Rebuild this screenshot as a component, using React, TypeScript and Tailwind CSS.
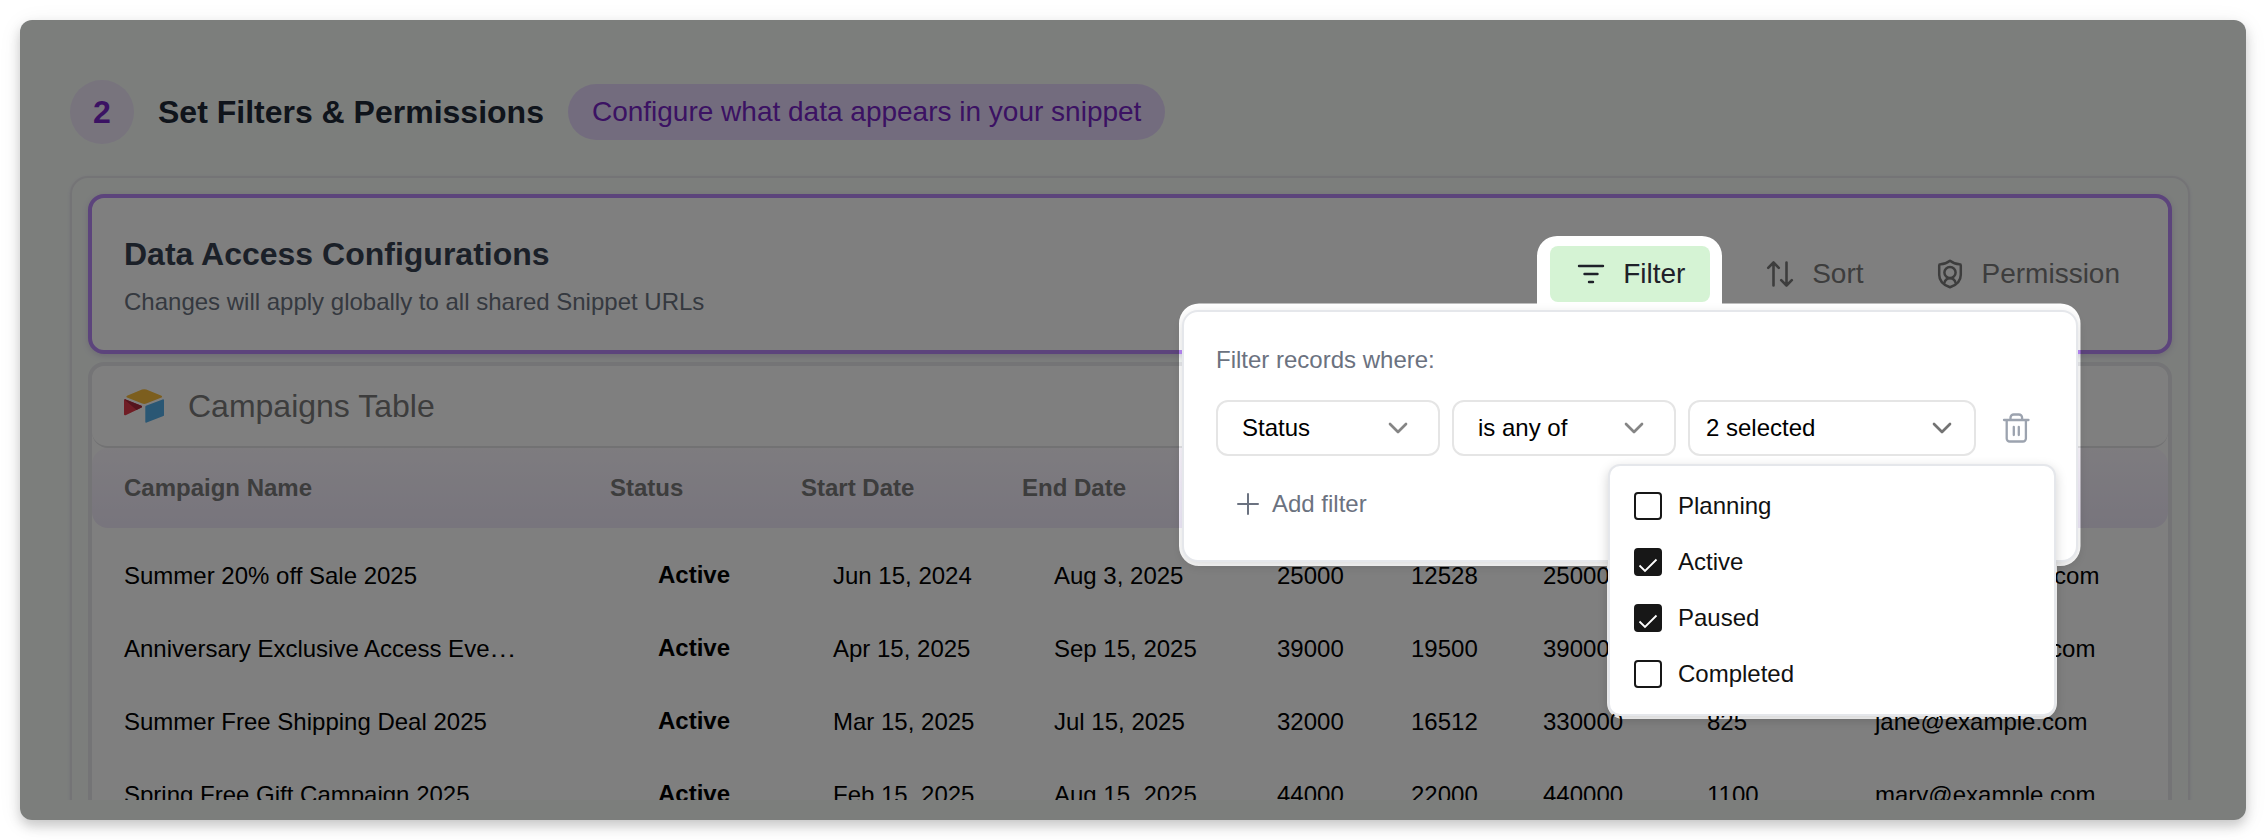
import React from "react";
import { ChevronDown } from "lucide-react";

const rows = [
  ["Summer 20% off Sale 2025", "Active", "Jun 15, 2024", "Aug 3, 2025", "25000", "12528", "250000", "625", "david@example.com"],
  ["Anniversary Exclusive Access Eve…", "Active", "Apr 15, 2025", "Sep 15, 2025", "39000", "19500", "390000", "975", "mark@example.com"],
  ["Summer Free Shipping Deal 2025", "Active", "Mar 15, 2025", "Jul 15, 2025", "32000", "16512", "330000", "825", "jane@example.com"],
  ["Spring Free Gift Campaign 2025", "Active", "Feb 15, 2025", "Aug 15, 2025", "44000", "22000", "440000", "1100", "mary@example.com"],
];

const options = [
  { label: "Planning", checked: false },
  { label: "Active", checked: true },
  { label: "Paused", checked: true },
  { label: "Completed", checked: false },
];

function FilterIcon() {
  return (
    <svg width="28" height="28" viewBox="0 0 28 28" fill="none" stroke="currentColor" strokeWidth="2.4" strokeLinecap="round">
      <path d="M2 6h24M7.5 14h13M12 22h4" />
    </svg>
  );
}

function SortIcon() {
  return (
    <svg width="28" height="28" viewBox="0 0 28 28" fill="none" stroke="currentColor" strokeWidth="2.6" strokeLinecap="round" strokeLinejoin="round">
      <path d="M7.500 25.500V2.500M2.200 7.800l5.300-5.300 5.300 5.300M20.500 2.500v23M15.200 20.200l5.300 5.300 5.300-5.300" />
    </svg>
  );
}

function PermissionIcon() {
  return (
    <svg width="28" height="32" viewBox="0 0 28 32" fill="none" stroke="currentColor" strokeWidth="2.5" strokeLinecap="round" strokeLinejoin="round">
      <path d="M14 2.800c-2.700 2.100-6 3.300-9.600 3.500-.7 0-1.200.5-1.200 1.200v9.200c0 5.800 4.200 10.300 10.800 12.600 6.600-2.300 10.800-6.800 10.800-12.600V7.500c0-.7-.5-1.200-1.200-1.200-3.600-.2-6.900-1.400-9.600-3.500z" />
      <circle cx="14" cy="14.500" r="5.600" />
      <path d="M8.200 25.200c.8-3 3-5 5.800-5s5 2 5.800 5" />
    </svg>
  );
}

function TrashIcon() {
  return (
    <svg width="28" height="32" viewBox="0 0 28 32" fill="none" stroke="currentColor" strokeWidth="2.300" strokeLinecap="round" strokeLinejoin="round">
      <path d="M2 8h24.500M4.700 8v18.500a3 3 0 0 0 3 3h13.200a3 3 0 0 0 3-3V8M8.500 7.500V5.700a3.200 3.200 0 0 1 3.200-3.200h5.200a3.200 3.200 0 0 1 3.200 3.200v1.800M11.800 15v8M16.800 15v8" />
    </svg>
  );
}

function TableLogo() {
  return (
    <svg className="h-[34px] w-[40px]" viewBox="0 0 40 34">
      <path d="M18 .6 3 6.800c-.8.4-.8 1.400 0 1.700l15.200 6c1.300.5 2.800.5 4.100 0l15.200-6c.8-.3.8-1.300 0-1.700L22.300.6a5.600 5.600 0 0 0-4.300 0z" fill="#f8bc3c" />
      <path d="M21.300 17.700v15c0 .7.700 1.200 1.400.9l16.700-6.500c.4-.1.600-.5.600-.9V11.300c0-.7-.7-1.200-1.400-.9l-16.700 6.400c-.4.200-.6.500-.6.900z" fill="#55aee8" />
      <path d="M17.500 18.500 12 21.200 1.600 26.200C.9 26.500 0 26 0 25.300V11.200c0-.3.100-.5.300-.7.500-.4 1-.3 1.400-.1l15.700 6.300c.8.300.9 1.400.1 1.800z" fill="#e13b4b" />
      <path d="M17.500 18.500 12.500 20.900.4 10.500c.5-.3.900-.2 1.300-.1l15.700 6.300c.8.300.9 1.400.1 1.800z" fill="#a8283a" />
    </svg>
  );
}

function Select({ label, width, strong }: { label: string; width: string; strong?: boolean }) {
  return (
    <div className={`flex h-14 items-center justify-between rounded-xl border-2 border-[#e5e5e5] text-black ${strong ? "pr-[16px] pl-4" : "pr-[24px] pl-6"} ${width}`}>
      <span>{label}</span>
      <ChevronDown size={32} className={strong ? "text-[#737373]" : "text-[#858585]"} />
    </div>
  );
}

export default function App() {
  return (
    <div className="h-[840px] w-[2266px] overflow-hidden bg-white p-5 font-['Liberation_Sans',Arial,sans-serif] text-2xl leading-8 text-black">
      <div className="relative h-[800px] w-[2226px] overflow-hidden rounded-xl bg-[#f8fcf9] [box-shadow:0_6px_12px_rgba(0,0,0,0.18),0_4px_24px_rgba(0,0,0,0.07)]">
        <div className="flex h-[780px] flex-col overflow-hidden px-[50px] pt-[60px]">
          <header className="flex h-16 shrink-0 items-center">
            <div className="flex size-16 items-center justify-center rounded-full bg-[#f0e8fb] text-[32px] font-bold text-[#7724c6]">2</div>
            <h1 className="ml-6 text-[32px] leading-10 font-bold text-[#1f2937]">Set Filters &amp; Permissions</h1>
            <div className="ml-6 flex h-14 items-center rounded-full bg-[#e7d9fc] px-6 text-[28px] text-[#7724c6]">Configure what data appears in your snippet</div>
          </header>

          <main className="mt-8 flex h-[700px] w-[2120px] shrink-0 flex-col gap-2 rounded-[18px] border-2 border-[#e9e8ec] p-4 shadow-[0_1px_3px_rgba(120,80,190,0.15)]">
            <section className="flex h-40 shrink-0 justify-between rounded-2xl border-4 border-[#b988f8] bg-white pl-8 shadow-[0_2px_6px_rgba(90,50,150,0.18)]">
              <div className="pt-9">
                <h2 className="text-[32px] leading-10 font-bold text-[#374151]">Data Access Configurations</h2>
                <p className="mt-3 text-[#6b7280]">Changes will apply globally to all shared Snippet URLs</p>
              </div>
              <div className="mt-12 mr-[48px] flex h-14 items-center text-[28px] text-[#7a7a7a]">
                <div className="mr-[56px] flex h-14 w-40 items-center gap-[18px] rounded-lg bg-[#d5f3d4] pl-[27px] text-[#1f2129]"><FilterIcon />Filter</div>
                <div className="mr-[72px] flex items-center gap-[18px]"><SortIcon />Sort</div>
                <div className="flex items-center gap-[18px]"><PermissionIcon />Permission</div>
              </div>
            </section>

            <section className="h-[600px] shrink-0 overflow-hidden rounded-2xl border-4 border-[#e8e9ec] bg-white">
              <div className="flex h-[82px] items-center gap-6 rounded-b-2xl border-b-2 border-[#e4e4e7] pl-8 text-[32px] text-[#7a7a7a]">
                <TableLogo />
                Campaigns Table
              </div>
              <div className="grid h-20 grid-cols-[486px_191px_221px_1fr] items-center rounded-2xl bg-linear-to-b from-[#fcf8ff] to-[#f0eafa] pl-8 font-bold text-[#7a7a7a]">
                <span>Campaign Name</span><span>Status</span><span>Start Date</span><span>End Date</span>
              </div>
              <div className="pt-[11px]">
                {rows.map((r) => (
                  <div key={r[0]} className="grid h-[73px] grid-cols-[534px_175px_221px_223px_134px_132px_164px_168px_1fr] items-center pl-8 whitespace-nowrap">
                    {r.map((c, i) => (
                      <span key={i} className={i === 1 ? "-mt-0.5 font-bold" : ""}>
                        {c.endsWith("…") ? <>{c.slice(0, -1)}<span className="inline-block origin-left scale-x-[1.15]">…</span></> : c}
                      </span>
                    ))}
                  </div>
                ))}
              </div>
            </section>
          </main>
        </div>

        <div className="absolute top-[290px] left-[1162px] h-[252px] w-[896px] rounded-2xl border-2 border-[#e5e7eb] bg-white pt-[32px] pl-[32px] text-[#6b7280] shadow-[0_4px_12px_rgba(0,0,0,0.14)]">
          <div>Filter records where:</div>
          <div className="mt-6 flex items-center gap-3">
            <Select label="Status" width="w-56" />
            <Select label="is any of" width="w-56" />
            <Select label="2 selected" width="w-72" strong />
            <div className="ml-[14px] text-[#9ca3af]"><TrashIcon /></div>
          </div>
          <div className="mt-8 flex items-center gap-3 pl-5">
            <svg width="24" height="24" viewBox="0 0 24 24" fill="none" stroke="currentColor" strokeWidth="2" strokeLinecap="round"><path d="M2 12h20M12 2v20" /></svg>
            Add filter
          </div>
        </div>

        <div className="absolute top-[444px] left-[1588px] flex h-[252px] w-[448px] flex-col gap-6 rounded-xl border-2 border-[#e5e7eb] bg-white pt-[24px] pl-6 text-[#111] shadow-[0_4px_12px_rgba(0,0,0,0.18)]">
          {options.map((o) => (
            <div key={o.label} className="flex h-8 items-center gap-4">
              <div className={`size-7 rounded-[4px] border-2 border-[#171717] ${o.checked ? "bg-[#171717]" : "bg-white"}`}>
                {o.checked && (
                  <svg width="24" height="24" viewBox="0 0 24 24" fill="none" stroke="white" strokeWidth="1.800"><path d="m3.500 15.500 5.500 5.500L20.500 9.500" /></svg>
                )}
              </div>
              {o.label}
            </div>
          ))}
        </div>

        <svg className="pointer-events-none absolute inset-0" width="2226" height="800" viewBox="0 0 2226 800">
          <path
            fill="#000"
            fillOpacity="0.5"
            fillRule="evenodd"
            d="M0 0H2226V800H0ZM1517 283.500V236a20 20 0 0 1 20-20H1682a20 20 0 0 1 20 20V283.500H2040.500a20 20 0 0 1 20 20V526a20 20 0 0 1-20 20H2037V683a16 16 0 0 1-16 16H1603a16 16 0 0 1-16-16V546H1179a20 20 0 0 1-20-20V303.500a20 20 0 0 1 20-20Z"
          />
        </svg>
      </div>
    </div>
  );
}
